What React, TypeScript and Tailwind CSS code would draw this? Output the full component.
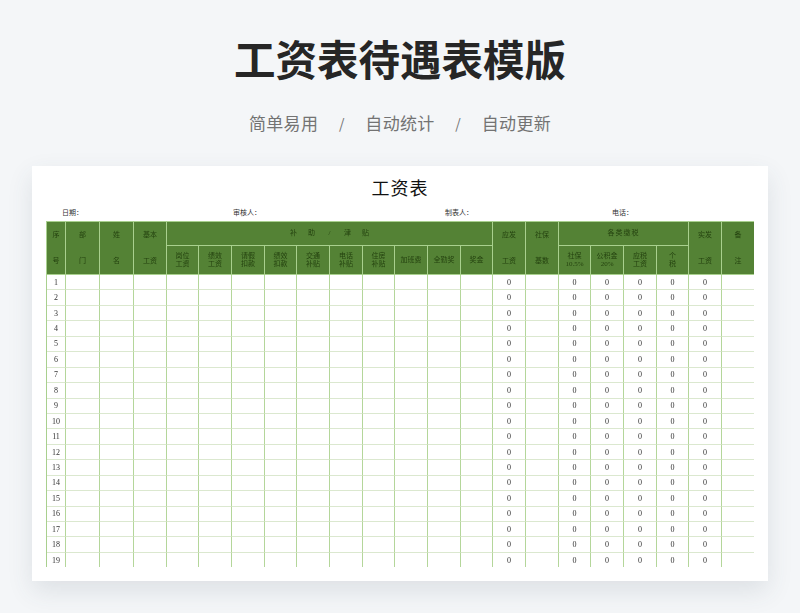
import React from 'react';

const colWidths = [
  'w-[19px]', 'w-[34px]', 'w-[34px]', 'w-[33px]', 'w-[32px]', 'w-[33px]', 'w-[33px]', 'w-[32px]',
  'w-[33px]', 'w-[33px]', 'w-[32px]', 'w-[33px]', 'w-[33px]', 'w-[32px]', 'w-[33px]', 'w-[33px]',
  'w-[32px]', 'w-[33px]', 'w-[33px]', 'w-[32px]', 'w-[33px]', 'w-[33px]',
];

const zeroCols = [14, 16, 17, 18, 19, 20];
const rows = Array.from({ length: 19 }, (_, i) => i + 1);

const headCell = 'border-r border-b border-[#a9d08e] bg-[#548235] p-0 text-center align-middle font-normal';

// 上下分开的表头（跨两行）
const TallHead = ({ top, bottom }: { top: string; bottom: string }) => (
  <th rowSpan={2} className={`${headCell} leading-[26px]`}>
    {top}
    <br />
    {bottom}
  </th>
);

const SubHead = ({ top, bottom }: { top: string; bottom?: string }) => (
  <th className={`${headCell} leading-[8.5px]`}>
    {top}
    {bottom && <br />}
    {bottom}
  </th>
);

const SalaryTable = () => (
  <div className="mx-[14px] mt-[3px] h-[346px] overflow-hidden will-change-transform">
    <table className="w-[708px] table-fixed border-separate border-spacing-0 border-t border-l border-[#a9d08e] text-[7px] text-[#24420f]">
      <colgroup>
        {colWidths.map((w, i) => (
          <col key={i} className={w} />
        ))}
      </colgroup>
      <thead>
        <tr className="h-[24px]">
          <TallHead top="序" bottom="号" />
          <TallHead top="部" bottom="门" />
          <TallHead top="姓" bottom="名" />
          <TallHead top="基本" bottom="工资" />
          <th colSpan={10} className={headCell}>
            {['补', '助', '/', '津', '贴'].map((t) => (
              <span key={t} className="inline-block w-[18px]">{t}</span>
            ))}
          </th>
          <TallHead top="应发" bottom="工资" />
          <TallHead top="社保" bottom="基数" />
          <th colSpan={4} className={`${headCell} tracking-[1px]`}>各类缴税</th>
          <TallHead top="实发" bottom="工资" />
          <TallHead top="备" bottom="注" />
        </tr>
        <tr className="h-[28.5px]">
          <SubHead top="岗位" bottom="工资" />
          <SubHead top="绩效" bottom="工资" />
          <SubHead top="请假" bottom="扣款" />
          <SubHead top="绩效" bottom="扣款" />
          <SubHead top="交通" bottom="补贴" />
          <SubHead top="电话" bottom="补贴" />
          <SubHead top="住房" bottom="补贴" />
          <SubHead top="加班费" />
          <SubHead top="全勤奖" />
          <SubHead top="奖金" />
          <SubHead top="社保" bottom="10.5%" />
          <SubHead top="公积金" bottom="20%" />
          <SubHead top="应税" bottom="工资" />
          <SubHead top="个" bottom="税" />
        </tr>
      </thead>
      <tbody className="text-[8px] text-[#333333]">
        {rows.map((n) => (
          <tr key={n} className="h-[15.45px]">
            {colWidths.map((_, c) => (
              <td key={c} className="border-r border-b border-r-[#b4d69a] border-b-[#dbe8cf] p-0 pt-px text-center leading-none">
                {c === 0 ? n : zeroCols.includes(c) ? 0 : ''}
              </td>
            ))}
          </tr>
        ))}
      </tbody>
    </table>
  </div>
);

export default function App() {
  return (
    <div className="h-[613px] w-[800px] overflow-hidden bg-[#f4f6f8] pt-[28px] font-['Noto_Sans_CJK_SC',sans-serif] antialiased">
      <h1 className="h-[60px] text-center text-[41.5px] leading-[60px] font-bold text-[#262626]">工资表待遇表模版</h1>

      <div className="mt-[23px] flex h-[24px] items-center justify-center text-[17px] leading-[24px] tracking-[0.35px] text-[#737373]">
        <span>简单易用</span>
        <span className="w-[47px] text-center text-[14px]">/</span>
        <span>自动统计</span>
        <span className="w-[47px] text-center text-[14px]">/</span>
        <span>自动更新</span>
      </div>

      <div className="mx-[32px] mt-[31px] h-[415px] bg-white pt-[11px] shadow-[0_10px_24px_rgba(60,70,90,0.12)] font-['Liberation_Serif','Noto_Sans_CJK_SC',serif]">
        <div className="h-[24px] text-center text-[18px] leading-[24px] tracking-[1px] text-[#111111]">工资表</div>
        <div className="mt-[7px] flex h-[10px] pl-[30px] text-[7px] leading-[10px] text-[#333333]">
          <span className="w-[171px]">日期：</span>
          <span className="w-[212px]">审核人：</span>
          <span className="w-[167px]">制表人：</span>
          <span>电话：</span>
        </div>
        <SalaryTable />
      </div>
    </div>
  );
}
